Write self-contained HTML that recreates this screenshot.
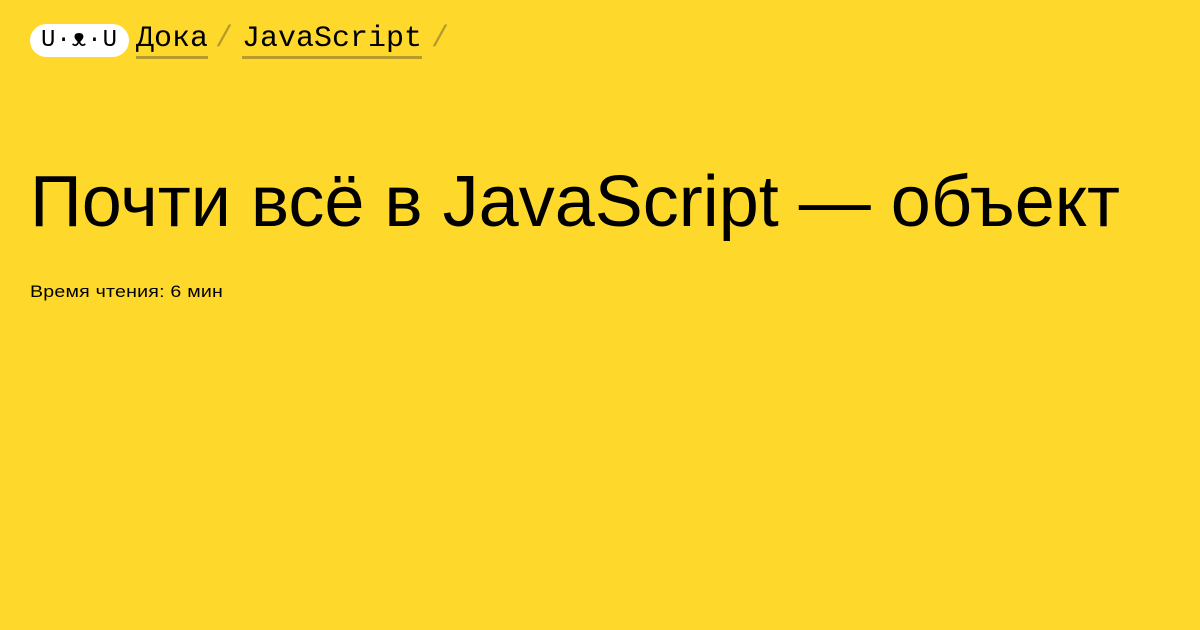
<!DOCTYPE html>
<html><head><meta charset="utf-8"><style>
body{margin:0;width:1200px;height:630px;background:#ffd82c;overflow:hidden;position:relative;font-family:"Liberation Sans",sans-serif;color:#000}
.pill{position:absolute;left:30px;top:24px;width:99px;height:33px;background:#fff;border-radius:17px;font-family:"Liberation Mono",monospace;font-size:24px;line-height:33px;text-align:center;letter-spacing:1px}
.nav{position:absolute;top:21px;font-family:"Liberation Mono",monospace;font-size:30px;line-height:36px}
.u{border-bottom:3px solid #b79a2c}
.sl{color:#b79a2c}
h1{position:absolute;left:30px;top:157px;margin:0;font-weight:normal;font-size:72px;line-height:90px;white-space:nowrap}
.t{position:absolute;left:30px;top:282px;font-size:17px;letter-spacing:0.2px;transform:scaleX(1.15);transform-origin:left}
</style></head><body>
<div class="pill">U·ᴥ·U</div>
<div class="nav" style="left:136px"><span class="u">Дока</span></div>
<div class="nav sl" style="left:215px">/</div>
<div class="nav" style="left:242px"><span class="u">JavaScript</span></div>
<div class="nav sl" style="left:431px">/</div>
<h1>Почти всё в JavaScript — объект</h1>
<div class="t">Время чтения: 6 мин</div>
</body></html>
